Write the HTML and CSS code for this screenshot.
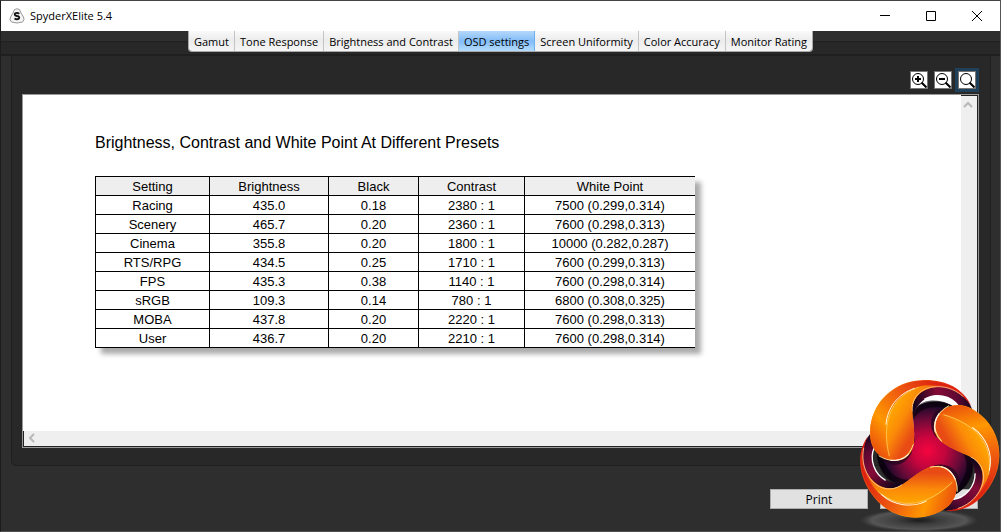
FILE: index.html
```html
<!DOCTYPE html>
<html lang="en">
<head>
<meta charset="utf-8">
<title>SpyderXElite 5.4</title>
<link rel="stylesheet" href="styles.css">
</head>
<body>
<div class="window">
  <header class="titlebar">
    <svg class="app-icon" width="16" height="16" viewBox="0 0 16 16" aria-hidden="true">
      <path d="M5.5 1.5Q8 0 10.500 1.500L12 5L14.500 9Q16 12 13.500 14Q8 16 2.500 14Q0 12 1.500 9L4 5Z" fill="#f4f4f4" stroke="#999"/>
      <path d="M10.300 5.700Q8 4 6 5.500Q5 7.500 8 8Q11 8.500 10 10.500Q8 12 5.500 10.500" fill="none" stroke="#111" stroke-width="1.800"/>
    </svg>
    <h1 class="app-title">SpyderXElite 5.4</h1>
    <div class="window-controls">
      <button type="button" aria-label="Minimize"><svg width="12" height="12" viewBox="0 0 12 12"><path d="M1 5.500H11"/></svg></button>
      <button type="button" aria-label="Maximize"><svg width="12" height="12" viewBox="0 0 12 12"><path d="M1.500 1.500H10.500V10.500H1.500Z"/></svg></button>
      <button type="button" aria-label="Close"><svg width="12" height="12" viewBox="0 0 12 12"><path d="M1 1L11 11M11 1L1 11"/></svg></button>
    </div>
  </header>

  <div class="tab-strip">
    <div class="tabs" role="tablist">
      <button type="button" role="tab" class="tab">Gamut</button>
      <button type="button" role="tab" class="tab">Tone Response</button>
      <button type="button" role="tab" class="tab">Brightness and Contrast</button>
      <button type="button" role="tab" class="tab selected" aria-selected="true">OSD settings</button>
      <button type="button" role="tab" class="tab">Screen Uniformity</button>
      <button type="button" role="tab" class="tab">Color Accuracy</button>
      <button type="button" role="tab" class="tab">Monitor Rating</button>
    </div>
  </div>

  <main class="panel">
    <div class="zoom-tools">
      <button type="button" class="zoom" aria-label="Zoom in"><svg width="16" height="16" viewBox="0 0 16 16"><circle cx="7" cy="7" r="5.500"/><path d="M4 7H10M7 4V10" class="thick"/><path d="M10.500 10.500L15.500 15.500" class="thick"/></svg></button>
      <button type="button" class="zoom" aria-label="Zoom out"><svg width="16" height="16" viewBox="0 0 16 16"><circle cx="7" cy="7" r="5.500"/><path d="M4 7H10" class="thick"/><path d="M10.500 10.500L15.500 15.500" class="thick"/></svg></button>
      <button type="button" class="zoom active" aria-label="Zoom to fit"><svg width="16" height="16" viewBox="0 0 16 16"><circle cx="7" cy="7" r="5.500"/><path d="M10.500 10.500L15.500 15.500" class="thick"/></svg></button>
    </div>
    <div class="viewer">
      <section class="report">
        <h2 class="report-title">Brightness, Contrast and White Point At Different Presets</h2>
        <table class="presets">
          <colgroup><col class="c-setting"><col class="c-brightness"><col class="c-black"><col class="c-contrast"><col class="c-white"></colgroup>
          <thead><tr><th>Setting</th><th>Brightness</th><th>Black</th><th>Contrast</th><th>White Point</th></tr></thead>
          <tbody>
            <tr><td>Racing</td><td>435.0</td><td>0.18</td><td>2380 : 1</td><td>7500 (0.299,0.314)</td></tr>
            <tr><td>Scenery</td><td>465.7</td><td>0.20</td><td>2360 : 1</td><td>7600 (0.298,0.313)</td></tr>
            <tr><td>Cinema</td><td>355.8</td><td>0.20</td><td>1800 : 1</td><td>10000 (0.282,0.287)</td></tr>
            <tr><td>RTS/RPG</td><td>434.5</td><td>0.25</td><td>1710 : 1</td><td>7600 (0.299,0.313)</td></tr>
            <tr><td>FPS</td><td>435.3</td><td>0.38</td><td>1140 : 1</td><td>7600 (0.298,0.314)</td></tr>
            <tr><td>sRGB</td><td>109.3</td><td>0.14</td><td>780 : 1</td><td>6800 (0.308,0.325)</td></tr>
            <tr><td>MOBA</td><td>437.8</td><td>0.20</td><td>2220 : 1</td><td>7600 (0.298,0.313)</td></tr>
            <tr><td>User</td><td>436.7</td><td>0.20</td><td>2210 : 1</td><td>7600 (0.298,0.314)</td></tr>
          </tbody>
        </table>
      </section>
      <div class="scroll-y"><svg width="10" height="8" viewBox="0 0 10 8"><path d="M1 6L5 2L9 6"/></svg></div>
      <div class="scroll-x"><svg width="8" height="10" viewBox="0 0 8 10"><path d="M6 1L2 5L6 9"/></svg></div>
    </div>
  </main>

  <footer class="actions">
    <button type="button" class="action">Print</button>
    <button type="button" class="action" aria-label="Close report"></button>
  </footer>

  <svg class="emblem" width="161" height="162" viewBox="0 0 483 486" aria-hidden="true">
    <defs>
      <radialGradient id="core" gradientUnits="userSpaceOnUse" cx="262" cy="243" r="160">
        <stop offset="0" stop-color="#f5053f"/><stop offset=".3" stop-color="#c4053d"/><stop offset=".6" stop-color="#6b0a38"/><stop offset=".85" stop-color="#1c0829"/><stop offset="1" stop-color="#050008"/>
      </radialGradient>
      <linearGradient id="orange" gradientUnits="userSpaceOnUse" x1="95" y1="200" x2="370" y2="60">
        <stop offset="0" stop-color="#ff8a05"/><stop offset=".3" stop-color="#ff9c00"/><stop offset=".6" stop-color="#f05a10"/><stop offset="1" stop-color="#dc1b12"/>
      </linearGradient>
      <linearGradient id="outer" gradientUnits="userSpaceOnUse" x1="90" y1="240" x2="300" y2="40">
        <stop offset="0" stop-color="#e8480f"/><stop offset=".3" stop-color="#ff9800"/><stop offset=".6" stop-color="#f0600f"/><stop offset="1" stop-color="#dc2012"/>
      </linearGradient>
      <linearGradient id="inner" gradientUnits="userSpaceOnUse" x1="140" y1="130" x2="225" y2="180">
        <stop offset="0" stop-color="#ffab00"/><stop offset=".5" stop-color="#fb8b08"/><stop offset="1" stop-color="#e84b14"/>
      </linearGradient>
      <linearGradient id="ring" gradientUnits="userSpaceOnUse" x1="225" y1="110" x2="395" y2="100">
        <stop offset="0" stop-color="#16051c"/><stop offset=".4" stop-color="#850b38"/><stop offset=".75" stop-color="#5e0832"/><stop offset="1" stop-color="#16051e"/>
      </linearGradient>
      <radialGradient id="floor"><stop offset="0" stop-color="#1b1b1b"/><stop offset=".35" stop-color="#3c3c3c"/><stop offset=".8" stop-color="#555"/><stop offset="1" stop-color="#444" stop-opacity="0"/></radialGradient>
      <g id="arm">
        <path fill="url(#core)" d="M268 300L215 265L222 215C228 180 205 132 238 106C270 87 325 91 350 118C300 105 280 145 290 185C294 204 310 217 330 228L310 270Z"/>
        <path fill="#080009" opacity=".65" d="M219 150C215 117 235 97 268 92C305 88 335 102 350 118C300 108 245 102 219 150Z"/>
        <path fill="#23051f" opacity=".75" d="M335 114C285 107 262 145 279 185C286 205 304 220 325 229C300 211 287 190 287 159C289 134 306 116 335 114Z"/>
      </g>
      <g id="band">
        <path fill="url(#ring)" d="M215 155C209 91 235 52 291 49C344 48 384 76 398 123L360 115C340 78 287 66 256 87C233 101 222 122 219 150Z"/>
        <path fill="none" stroke="#fff" stroke-width="4" d="M253 88C285 68 333 76 355 108"/>
      </g>
      <g id="blade">
        <path fill="url(#orange)" d="M160 272C115 267 88 231 90 185C92 100 160 32 250 30C315 28 370 55 394 108C364 65 322 46 280 52C235 60 215 95 217 125C217 151 225 181 222 215C218 250 198 274 160 272Z"/>
        <path fill="url(#outer)" d="M152 271C111 262 88 228 91 180C95 108 150 43 230 34C270 30 312 36 343 56C311 43 273 42 236 51C140 82 119 180 152 271Z"/>
        <path fill="url(#inner)" d="M151 270C124 182 142 82 235 51C254 45 277 46 292 51C237 56 213 91 217 125C218 153 226 182 221 217C216 247 193 277 151 270Z"/>
        <path fill="none" stroke="#ffd36a" stroke-width="2" d="M148 258C125 168 145 83 236 51"/>
        <path fill="none" stroke="#fff8d8" stroke-width="3" d="M138 164C141 116 173 71 224 55"/>
        <path fill="none" stroke="#ffdf90" stroke-width="3" d="M116 257C157 283 204 273 220 223"/>
        <path fill="none" stroke="#fff" stroke-width="3" d="M151 271Q184 275 206 253"/>
        <path fill="none" stroke="#ffe1a0" stroke-width="2" d="M217 124C213 86 241 51 289 50C323 49 350 62 370 80"/>
      </g>
    </defs>
    <ellipse cx="237" cy="451" rx="178" ry="34" fill="url(#floor)"/>
    <use href="#arm"/><use href="#arm" transform="rotate(120 265 243)"/><use href="#arm" transform="rotate(240 265 243)"/>
    <circle cx="263" cy="243" r="48" fill="url(#core)"/>
    <use href="#band"/><use href="#band" transform="rotate(120 265 243)"/><use href="#band" transform="rotate(240 265 243)"/>
    <use href="#blade"/><use href="#blade" transform="rotate(120 265 243)"/><use href="#blade" transform="rotate(240 265 243)"/>
  </svg>
</div>
</body>
</html>
```
FILE: styles.css
```css
* { box-sizing: border-box; }
body {
  margin: 0;
  background: #2e2e2e;
  color: #000;
  font-family: "Open Sans", "Noto Sans", sans-serif;
  font-size: 12px;
}
button { font: inherit; color: inherit; margin: 0; padding: 0; border: 0; }
.window {
  position: relative;
  display: flex;
  flex-direction: column;
  min-height: 100vh;
  border: 1px solid #1c1c1c;
  border-top-color: #444;
  border-right-color: #555;
  border-bottom-color: #505050;
}
.titlebar {
  display: flex;
  align-items: center;
  height: 30px;
  padding-left: 8px;
  background: #fff;
}
.app-title { margin: 0 auto 0 5px; font-size: 11px; line-height: 16px; font-weight: 400; }
.window-controls { display: flex; }
.window-controls button { width: 46px; height: 30px; background: none; display: grid; place-items: center; }
.window-controls path { fill: none; stroke: #000; }
.tab-strip {
  display: flex;
  justify-content: center;
  height: 25px;
  background: linear-gradient(#2e2e2e 10px, #1f1f1f 10px, #282828 12px, #282828 23px, #1f1f1f 23px);
}
.tabs {
  display: flex;
  height: 21px;
  border: solid #aaa;
  border-width: 0 1px 1px;
  border-radius: 0 0 4px 4px;
  overflow: hidden;
}
.tab {
  padding: 0 5px;
  border-right: 1px solid #c4c4c4;
  background: linear-gradient(#fafafa, #ececec 45%, #f5f5f5);
  font-size: 11px;
  white-space: nowrap;
}
.tab:last-child { border-right: 0; }
.tab.selected { background: linear-gradient(#b5d8fb, #82bcf8 50%, #b4dcff); border-right-color: #6db0f0; }
.panel {
  flex: 1;
  display: flex;
  flex-direction: column;
  margin: 0 9px 0 10px;
  padding: 12px 11px 17px 10px;
  background: #282828;
  border: solid #1f1f1f;
  border-width: 0 1px 1px;
  border-radius: 0 0 5px 5px;
}
.zoom-tools { display: flex; justify-content: flex-end; height: 26px; }
.zoom {
  width: 24px;
  height: 24px;
  display: grid;
  place-items: center;
  background: none;
  border: 3px solid transparent;
}
.zoom.active { border-color: #20405a; }
.zoom svg { width: 18px; height: 18px; background: #fff; border: 1px solid #777; fill: none; stroke: #000; }
.zoom .thick { stroke-width: 2; }
.viewer {
  flex: 1;
  display: grid;
  grid-template-columns: 1fr 17px;
  grid-template-rows: 1fr 16px;
  background: #efefef;
  border: 1px solid #999;
}
.report { background: #fff; padding: 38px 72px; font-family: "Liberation Sans", Arial, sans-serif; }
.report-title { margin: 0 0 24px; font-size: 16px; line-height: 19px; font-weight: 400; }
.presets {
  width: 600px;
  table-layout: fixed;
  border-collapse: collapse;
  font-size: 13px;
  line-height: 16px;
  text-align: center;
  box-shadow: 6px 6px 5px #aaa;
  background: #fff;
}
.presets th, .presets td { height: 19px; padding: 2px 0 0; border: 1px solid #000; font-weight: 400; }
.presets th { background: #eee; }
.presets tr > :last-child { border-right: 0; }
.c-setting { width: 114px; }
.c-brightness { width: 119px; }
.c-black { width: 90px; }
.c-contrast { width: 106px; }
.scroll-y { border-top: 1px solid #222; border-right: 1px solid #222; padding: 5px 2px; line-height: 8px; }
.scroll-x { grid-column: 1 / -1; border: solid #222; border-width: 0 1px 1px; padding: 2px 4px; line-height: 8px; }
.scroll-y svg, .scroll-x svg { fill: none; stroke: #b8b8b8; stroke-width: 2; }
.actions { display: flex; justify-content: flex-end; gap: 12px; padding: 23px 22px 22px; }
.action { width: 98px; height: 20px; background: #e1e1e1; border: 1px solid #adadad; }
.emblem { position: absolute; right: -1px; bottom: -1px; }
```
